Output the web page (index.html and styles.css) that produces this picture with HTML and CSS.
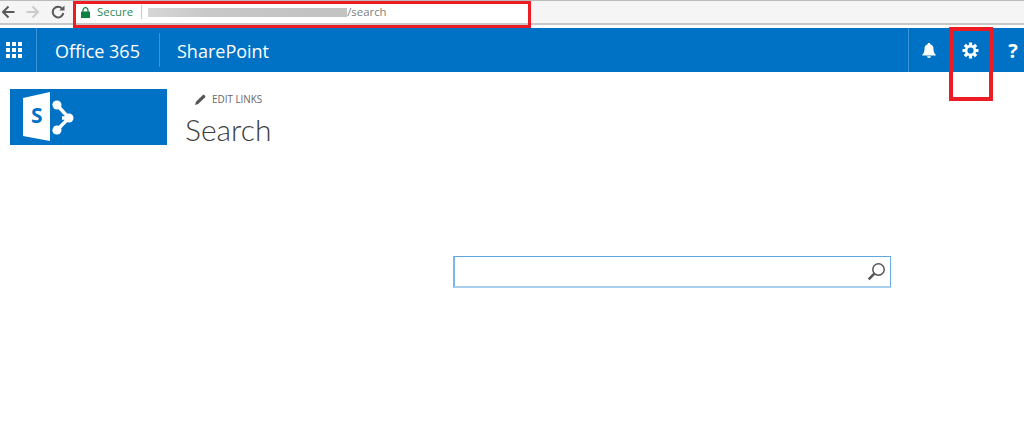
FILE: index.html
```html
<!DOCTYPE html>
<html lang="en">
<head>
<meta charset="utf-8">
<title>Search</title>
<link rel="stylesheet" href="styles.css">
</head>
<body>
<div class="browser">
  <div class="toolbar">
    <div class="nav-icons">
      <svg class="nav-icon" width="14" height="14" viewBox="0 0 14 14"><path d="M13.500 7H2M7.500 1.500 2 7l5.500 5.500" fill="none" stroke="#5a5a5a" stroke-width="2"/></svg>
      <svg class="nav-icon" width="14" height="14" viewBox="0 0 14 14"><path d="M.5 7H12M6.500 1.500 12 7l-5.500 5.500" fill="none" stroke="#cbcbcb" stroke-width="2"/></svg>
      <svg class="nav-icon" width="14" height="14" viewBox="0 0 14 14"><path d="M11.400 4A5.300 5.300 0 1 0 12.300 8" fill="none" stroke="#5a5a5a" stroke-width="2"/><path d="M8.300 5.600h5.200V.4z" fill="#5a5a5a"/></svg>
    </div>
    <div class="address">
      <svg class="lock" width="9" height="11" viewBox="0 0 9 11"><path d="M2 5V3.200a2.500 2.500 0 0 1 5 0V5" fill="none" stroke="#0b8043" stroke-width="1.200"/><rect y="4.500" width="9" height="6.500" rx=".6" fill="#0b8043"/></svg>
      <span class="secure">Secure</span>
      <span class="divider"></span>
      <span class="blur"></span>
      <span class="path">/search</span>
    </div>
  </div>
</div>
<header class="suite">
  <div class="waffle">
    <svg width="16" height="16" viewBox="0 0 16 16" fill="#fff"><rect x="0" y="0" width="4" height="4"/><rect x="6" y="0" width="4" height="4"/><rect x="12" y="0" width="4" height="4"/><rect x="0" y="6" width="4" height="4"/><rect x="6" y="6" width="4" height="4"/><rect x="12" y="6" width="4" height="4"/><rect x="0" y="12" width="4" height="4"/><rect x="6" y="12" width="4" height="4"/><rect x="12" y="12" width="4" height="4"/></svg>
  </div>
  <div class="brand">Office 365</div>
  <div class="app">SharePoint</div>
  <div class="suite-actions">
    <div class="action action-bell">
      <svg width="14" height="15" viewBox="0 0 14 15" fill="#fff"><path d="M7 0c.8 0 1.300.5 1.400 1.200C10.600 1.800 11.500 3.600 11.500 6c0 2.800.6 4.200 2.200 5.800V12.500H.3v-.7C1.900 10.200 2.500 8.800 2.500 6c0-2.400.9-4.200 3.100-4.800C5.700.5 6.200 0 7 0z"/><path d="M5 13.300h4a2 1.700 0 0 1-4 0z"/></svg>
    </div>
    <div class="action action-gear">
      <svg width="17" height="17" viewBox="0 0 16 16"><path d="M8 .5v15M.5 8h15M2.700 2.700l10.600 10.600M13.300 2.700 2.700 13.300" stroke="#fff" stroke-width="3"/><circle cx="8" cy="8" r="5.300" fill="#fff"/><circle cx="8" cy="8" r="2.900" fill="#0072c6"/></svg>
    </div>
    <div class="action action-help">?</div>
  </div>
</header>
<main class="page">
  <div class="site-head">
    <div class="logo">
      <svg width="52" height="50" viewBox="0 0 52 50">
        <path d="M0 6 27 0v49L0 44z" fill="#fff"/>
        <path d="M34 13 46 26 34 38M39 26h7M30 11l4 2M30 40l4-2" fill="none" stroke="#fff" stroke-width="3.400"/>
        <circle cx="34" cy="13" r="4.500" fill="#fff"/><circle cx="34" cy="38" r="4.500" fill="#fff"/><circle cx="46" cy="26" r="4.500" fill="#fff"/>
      </svg>
      <span class="logo-s">S</span>
    </div>
    <div class="titles">
      <div class="edit-links">
        <svg width="11" height="11" viewBox="0 0 11 11"><path d="M0 11l1-3.200L7.800.9a1 1 0 0 1 1.400 0l.9.9a1 1 0 0 1 0 1.400L3.200 10z" fill="#555"/></svg>
        <span>EDIT LINKS</span>
      </div>
      <h1 class="title">Search</h1>
    </div>
  </div>
  <div class="search-wrap">
    <div class="search">
      <svg width="19" height="19" viewBox="0 0 19 19"><circle cx="11.500" cy="7.500" r="5.700" fill="none" stroke="#555" stroke-width="1.500"/><path d="M7.300 11.700 1.700 17.300" stroke="#555" stroke-width="2.600"/></svg>
    </div>
  </div>
</main>
<div class="mark mark-url"></div>
<div class="mark mark-gear"></div>
</body>
</html>
```
FILE: styles.css
```css
* { box-sizing: border-box; }
html, body { margin: 0; height: 100%; }
body {
  position: relative;
  width: 1024px;
  height: 438px;
  overflow: hidden;
  background: #fff;
  font-family: "Open Sans", "Noto Sans", sans-serif;
  display: flex;
  flex-direction: column;
}
.browser {
  flex: none;
  height: 28px;
  background: #fff;
  border-top: 1px solid #bbb;
}
.toolbar {
  height: 24px;
  background: #f5f5f5;
  border-bottom: 2px solid #c8c8c8;
  display: flex;
  align-items: center;
  padding-left: 1px;
}
.nav-icons { display: flex; gap: 11px; width: 74px; }
.nav-icon { display: block; flex: none; }
.address {
  flex: none;
  width: 453px;
  height: 22px;
  background: #fff;
  display: flex;
  align-items: center;
  padding-left: 6px;
  font-size: 11.400px;
  line-height: 22px;
}
.lock { flex: none; }
.secure { color: #2e8b57; margin-left: 7px; }
.divider { width: 1px; height: 14px; background: #c9c9c9; margin: 0 6px 0 8px; }
.blur { width: 199px; height: 9px; background: linear-gradient(90deg, #d6d6d6, #c8c8c8 30%, #c2c2c2); }
.path { color: #808080; }
.suite {
  flex: none;
  height: 44px;
  background: #0072c6;
  color: #fff;
  display: flex;
  align-items: center;
}
.waffle {
  width: 37px;
  height: 44px;
  border-right: 1px solid #3d93d4;
  display: flex;
  align-items: center;
  padding-left: 6px;
}
.brand {
  width: 123px;
  height: 34px;
  padding-left: 18px;
  font-size: 18px;
  line-height: 36px;
  border-right: 1px solid #3d93d4;
}
.app { height: 34px; padding-left: 17px; font-size: 18px; line-height: 36px; }
.suite-actions { margin-left: auto; display: flex; height: 44px; border-left: 1px solid #3d93d4; }
.action { height: 44px; display: flex; align-items: center; justify-content: center; }
.action-bell { width: 40px; }
.action-gear { width: 42px; padding-top: 1px; }
.action-help { width: 33px; padding-left: 11px; font-size: 20px; font-weight: 700; }
.page { flex: 1; display: flex; flex-direction: column; }
.site-head { display: flex; padding: 17px 0 0 10px; }
.logo {
  position: relative;
  width: 157px;
  height: 56px;
  background: #0072c6;
  padding: 3px 0 0 13px;
}
.logo svg { display: block; }
.logo-s {
  position: absolute;
  left: 21px;
  top: 12px;
  color: #0072c6;
  font-size: 21px;
  line-height: 28px;
  font-weight: 700;
}
.titles { margin-left: 18px; }
.edit-links {
  display: flex;
  align-items: center;
  gap: 6px;
  padding: 5px 0 0 10px;
  height: 16px;
  color: #666;
  font-size: 9.900px;
  line-height: 11px;
}
.title {
  margin: 5px 0 0;
  color: #3d3d3d;
  font-family: "Lato", "Open Sans", sans-serif;
  font-size: 30px;
  line-height: 38px;
  font-weight: 300;
}
.search-wrap { padding: 108px 0 0 453px; }
.search {
  width: 438px;
  height: 32px;
  border-style: solid;
  border-width: 1px 1px 2px 2px;
  border-color: #5ea7e0 #6aaee6 #a9cff0 #7ab6e8;
  display: flex;
  align-items: center;
  justify-content: flex-end;
  padding-right: 4px;
}
.mark { position: absolute; border-style: solid; border-color: #ed1c24; }
.mark-url { left: 73px; top: 1px; width: 458px; height: 27px; border-width: 3px; }
.mark-gear { left: 949px; top: 27px; width: 44px; height: 74px; border-width: 4px; }
```
